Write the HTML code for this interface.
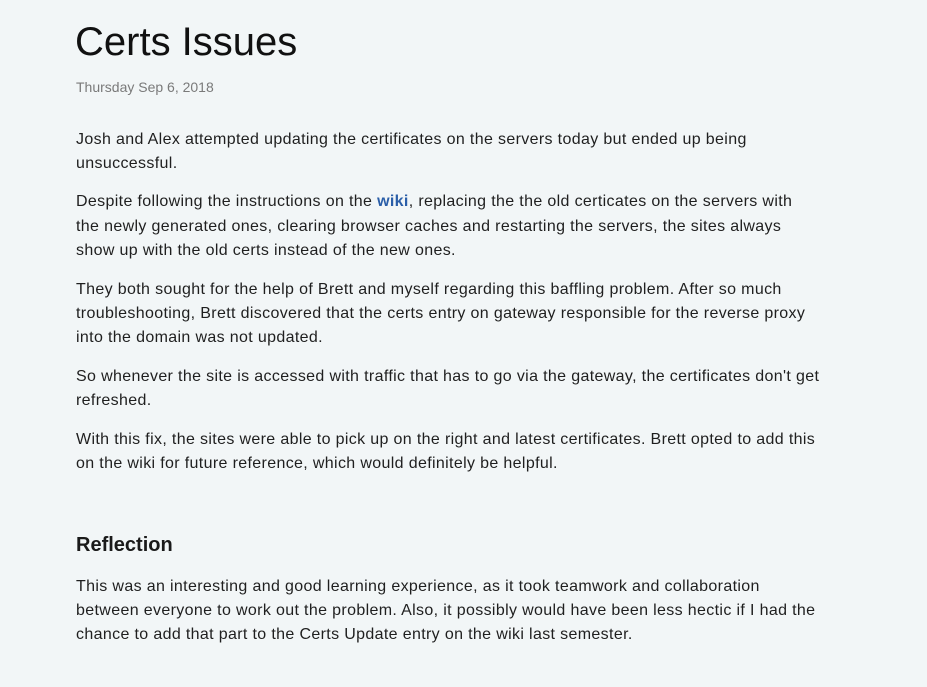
<!DOCTYPE html>
<html><head><meta charset="utf-8"><style>
html,body{margin:0;padding:0;background:#f2f6f7;width:927px;height:687px;overflow:hidden}
body{font-family:"Liberation Sans",Arial,sans-serif;color:#222;position:relative}
.l{position:absolute;left:76px;font-size:16px;line-height:24px;white-space:nowrap;color:#1f1f1f;letter-spacing:0.35px}
a{color:#2a5ea8;font-weight:bold;text-decoration:none}
h1{position:absolute;left:75px;top:15px;margin:0;font-weight:normal;font-size:40px;line-height:54px;color:#111;white-space:nowrap}
.d{position:absolute;left:76px;top:78px;font-size:14px;line-height:18px;color:#7a7a7a}
h2{position:absolute;left:76px;top:532px;margin:0;font-size:20px;line-height:26px;font-weight:bold;color:#1a1a1a}
</style></head><body>
<h1>Certs Issues</h1>
<div class="d">Thursday Sep 6, 2018</div>
<div class="l" style="top:128px">Josh and Alex attempted updating the certificates on the servers today but ended up being</div>
<div class="l" style="top:152px">unsuccessful.</div>
<div class="l" style="top:190px">Despite following the instructions on the <a>wiki</a>, replacing the the old certicates on the servers with</div>
<div class="l" style="top:215px">the newly generated ones, clearing browser caches and restarting the servers, the sites always</div>
<div class="l" style="top:239px">show up with the old certs instead of the new ones.</div>
<div class="l" style="top:278px">They both sought for the help of Brett and myself regarding this baffling problem. After so much</div>
<div class="l" style="top:302px">troubleshooting, Brett discovered that the certs entry on gateway responsible for the reverse proxy</div>
<div class="l" style="top:326px">into the domain was not updated.</div>
<div class="l" style="top:365px">So whenever the site is accessed with traffic that has to go via the gateway, the certificates don't get</div>
<div class="l" style="top:389px">refreshed.</div>
<div class="l" style="top:428px">With this fix, the sites were able to pick up on the right and latest certificates. Brett opted to add this</div>
<div class="l" style="top:452px">on the wiki for future reference, which would definitely be helpful.</div>
<h2>Reflection</h2>
<div class="l" style="top:575px">This was an interesting and good learning experience, as it took teamwork and collaboration</div>
<div class="l" style="top:599px">between everyone to work out the problem. Also, it possibly would have been less hectic if I had the</div>
<div class="l" style="top:623px">chance to add that part to the Certs Update entry on the wiki last semester.</div>
</body></html>
